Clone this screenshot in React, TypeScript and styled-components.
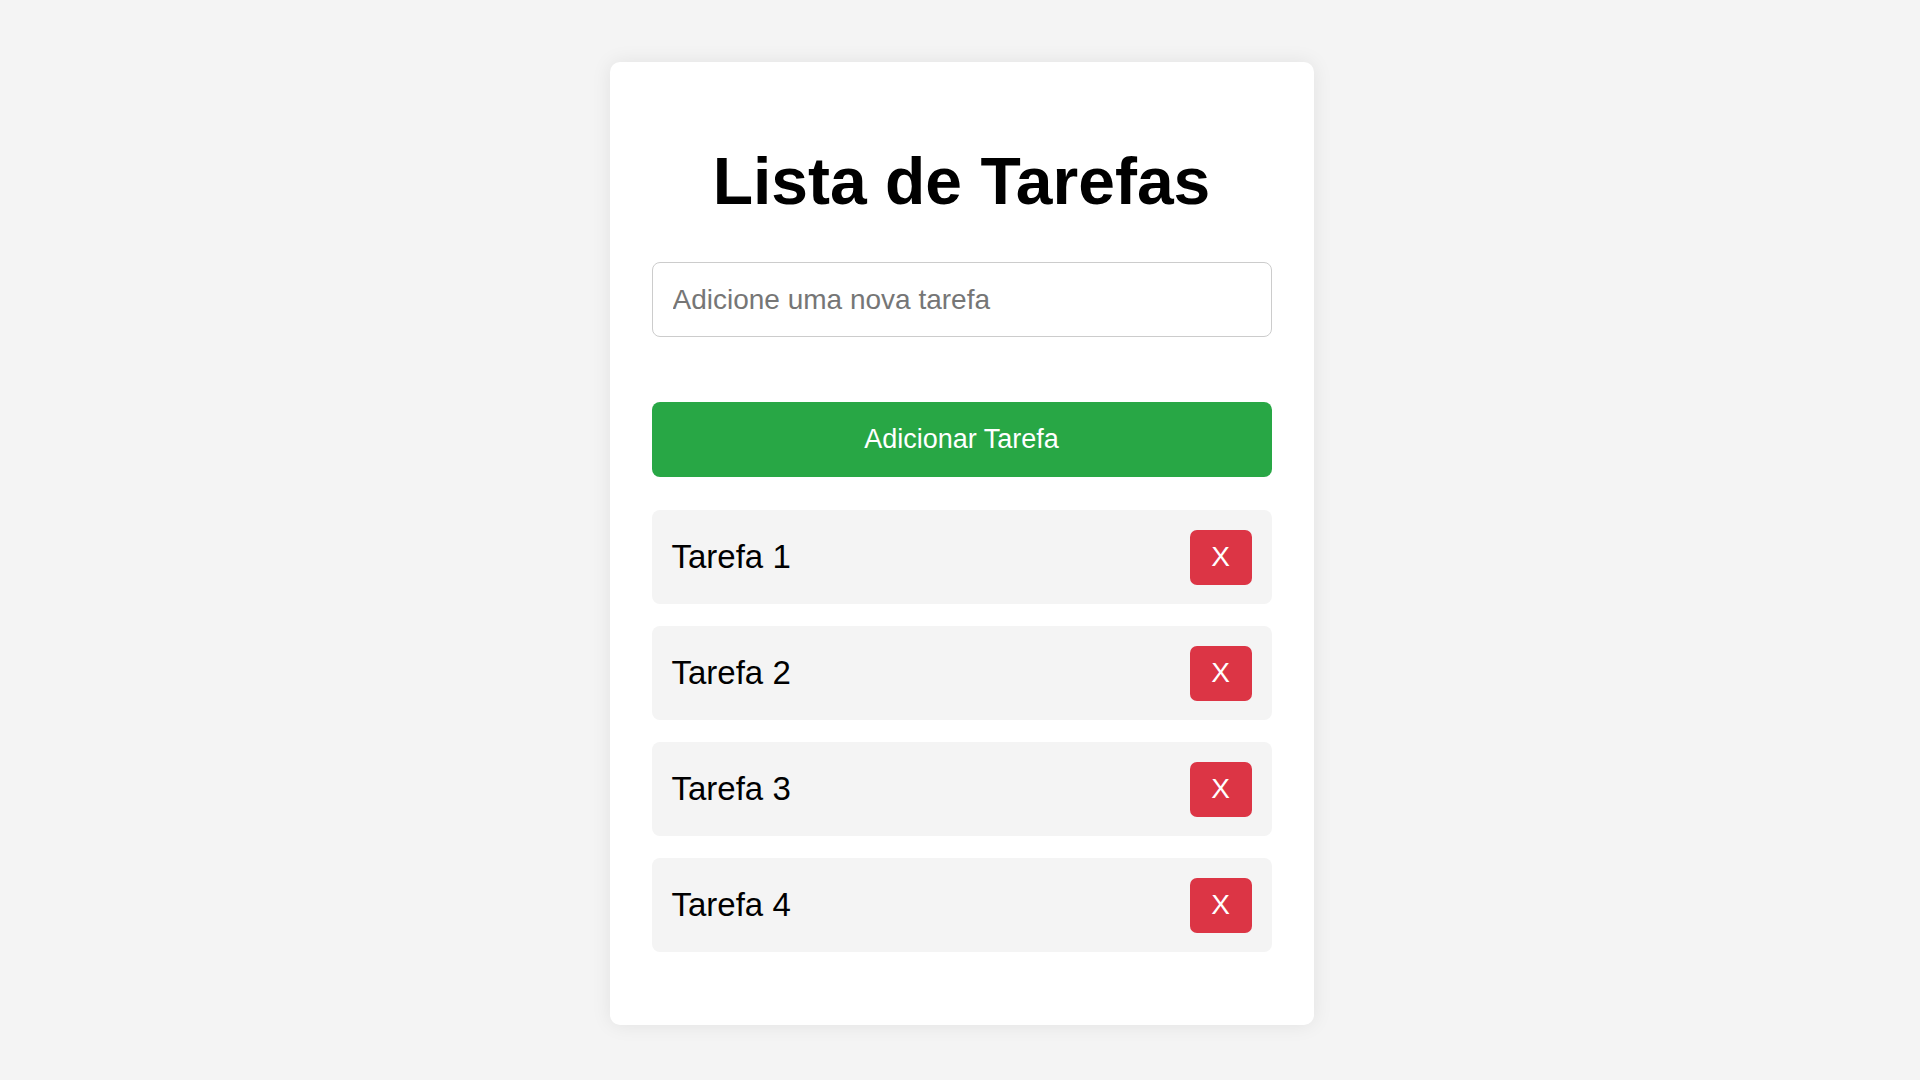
import React from "react";
import styled, { createGlobalStyle } from "styled-components";

const GlobalStyle = createGlobalStyle`
  html, body {
    margin: 0;
    padding: 0;
    background: #f4f4f4;
    font-family: "Liberation Sans", Arial, sans-serif;
  }
  * { box-sizing: border-box; }
`;

const Page = styled.div`
  min-height: 1080px;
  display: flex;
  justify-content: center;
  align-items: flex-start;
  padding: 62px 0 0 3px;
`;

const Card = styled.div`
  width: 704px;
  background: #ffffff;
  border-radius: 10px;
  box-shadow: 0 0 20px rgba(0, 0, 0, 0.08);
  padding: 85px 42px 73px;
  display: flex;
  flex-direction: column;
`;

const Title = styled.h1`
  margin: 0;
  font-size: 66px;
  line-height: 68px;
  font-weight: 700;
  color: #000;
  text-align: center;
`;

const TaskInput = styled.input`
  margin-top: 47px;
  width: 100%;
  height: 75px;
  border: 1px solid #cccccc;
  border-radius: 8px;
  padding: 0 20px;
  font-family: "Liberation Sans", Arial, sans-serif;
  font-size: 28px;
  color: #000;
  outline: none;
  &::placeholder {
    color: #767676;
  }
`;

const AddButton = styled.button`
  margin-top: 65px;
  width: 100%;
  height: 75px;
  border: none;
  border-radius: 8px;
  background: #28a745;
  color: #ffffff;
  font-family: "Liberation Sans", Arial, sans-serif;
  font-size: 27px;
  cursor: pointer;
`;

const List = styled.ul`
  list-style: none;
  margin: 33px 0 0;
  padding: 0;
  display: flex;
  flex-direction: column;
  gap: 22px;
`;

const Item = styled.li`
  height: 94px;
  background: #f4f4f4;
  border-radius: 8px;
  padding: 0 20px;
  display: flex;
  align-items: center;
  justify-content: space-between;
`;

const ItemText = styled.span`
  font-size: 33px;
  color: #000;
`;

const DeleteButton = styled.button`
  width: 62px;
  height: 55px;
  border: none;
  border-radius: 7px;
  background: #dc3545;
  color: #ffffff;
  font-family: "Liberation Sans", Arial, sans-serif;
  font-size: 28px;
  display: flex;
  align-items: center;
  justify-content: center;
  padding: 0;
  cursor: pointer;
`;

const tasks = ["Tarefa 1", "Tarefa 2", "Tarefa 3", "Tarefa 4"];

export default function App() {
  return (
    <>
      <GlobalStyle />
      <Page>
        <Card>
          <Title>Lista de Tarefas</Title>
          <TaskInput type="text" placeholder="Adicione uma nova tarefa" />
          <AddButton>Adicionar Tarefa</AddButton>
          <List>
            {tasks.map((t) => (
              <Item key={t}>
                <ItemText>{t}</ItemText>
                <DeleteButton>X</DeleteButton>
              </Item>
            ))}
          </List>
        </Card>
      </Page>
    </>
  );
}
